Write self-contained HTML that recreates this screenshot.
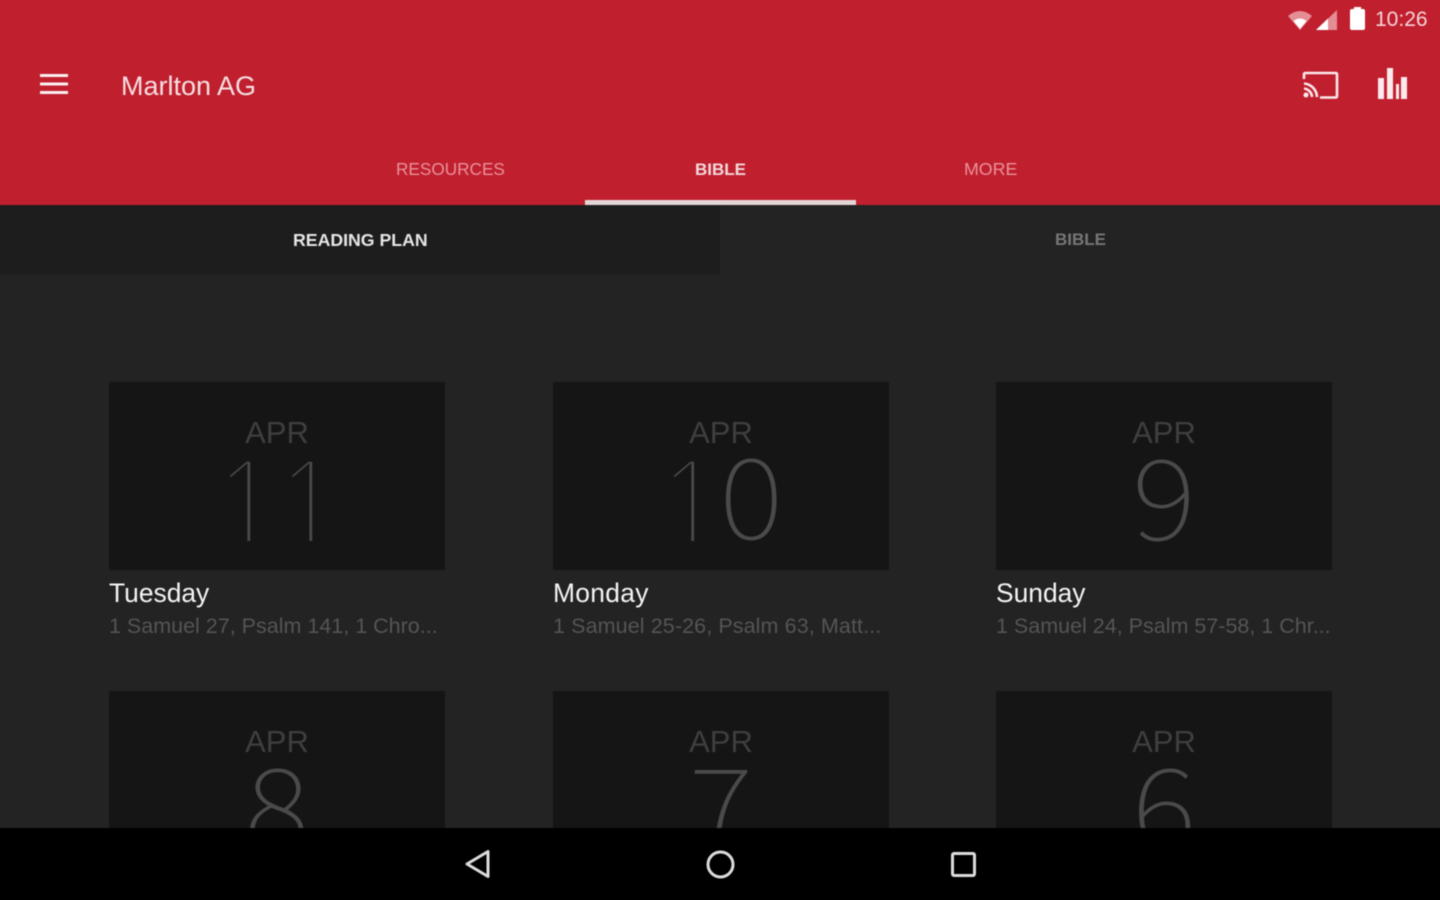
<!DOCTYPE html>
<html><head><meta charset="utf-8"><style>
html,body{margin:0;padding:0;width:1440px;height:900px;overflow:hidden;background:#232323}
body{position:relative;font-family:"Liberation Sans",sans-serif}
#w{position:absolute;left:0;top:0;width:1440px;height:900px;filter:blur(.55px)}
.a{position:absolute;white-space:nowrap}
.card{position:absolute;width:336px;height:188px;background:#151515;overflow:hidden}
.apr{position:absolute;left:0;width:336px;text-align:center;top:32px;font-size:31px;line-height:38px;color:#3f3f3f}
.num{position:absolute;left:0;width:336px;text-align:center;color:#4a4a4a}
.n1{top:57px;font-family:NanumGothic,sans-serif;font-size:113px;line-height:130px;-webkit-text-stroke:5px #151515;paint-order:fill stroke;letter-spacing:-6.500px;box-sizing:border-box;padding-right:8px}
.nt{top:45px;font-family:"Noto Sans CJK JP",sans-serif;font-weight:100;font-size:112px;line-height:130px;transform:scaleX(1.1)}
.z{display:inline-block;position:relative;top:-4px;font-family:"Noto Sans CJK JP",sans-serif;font-weight:100;font-size:112px;line-height:0;-webkit-text-stroke:0;letter-spacing:0;transform:scaleX(1.1);margin-left:5px}
.d{font-size:26.400px;line-height:30px;color:#f4f4f4}
.s{font-size:21.500px;line-height:26px;color:#555}
</style></head><body><div id="w">
<div class="a" style="left:-5px;top:-5px;width:1450px;height:210px;background:#c01f2e"></div>
<div class="a" style="left:-5px;top:205px;width:725px;height:70px;background:#1d1d1d"></div>
<div class="a" style="left:585px;top:200px;width:271px;height:5px;background:#e4d6d7"></div>

<svg class="a" style="left:1285px;top:5px" width="60" height="28" viewBox="0 0 60 28">
<path d="M3 11 Q15 1 27 11 L15 25Z" fill="#e58d95"/>
<path d="M8.500 16 Q15 11 21.500 16 L15 24Z" fill="#fff"/>
<path d="M31 25 L52 5 V25Z" fill="#e58d95"/>
<path d="M31 25 L43 13.500 V25Z" fill="#fff"/>
</svg>
<div class="a" style="left:1350px;top:9px;width:15px;height:21px;background:#fff;border-radius:2px"></div>
<div class="a" style="left:1354px;top:7px;width:7px;height:3px;background:#fff"></div>
<div class="a" style="left:1375px;top:7px;font-size:21px;line-height:26px;color:#f3d5d8">10:26</div>

<svg class="a" style="left:38px;top:72px" width="32" height="24" viewBox="0 0 32 24"><path d="M2 3.500H30M2 12H30M2 20.500H30" stroke="#fbeef0" stroke-width="3" fill="none"/></svg>
<div class="a" style="left:121px;top:69px;font-size:27px;line-height:34px;color:#f6dfe1">Marlton AG</div>

<svg class="a" style="left:1300px;top:68px" width="40" height="34" viewBox="0 0 40 34" fill="none" stroke="#fbe9eb" stroke-width="2.600">
<path d="M4 11V6.500Q4 5 5.500 5H35.500Q37 5 37 6.500V28Q37 29.500 35.500 29.500H20"/>
<path d="M4 15.500A14 14 0 0 1 17 29M4 20.500A9 9 0 0 1 12 29"/>
<circle cx="6" cy="27" r="2.500" fill="#fbe9eb" stroke="none"/>
</svg>
<svg class="a" style="left:1375px;top:66px" width="36" height="36" viewBox="0 0 36 36" fill="#fbe9eb">
<rect x="3" y="12" width="6" height="21"/><rect x="12" y="2" width="6" height="31"/><rect x="21" y="18" width="3" height="15"/><rect x="26" y="11" width="6" height="22"/>
</svg>

<div class="a" style="left:396px;top:157px;font-size:17.200px;line-height:24px;color:#e9929a">RESOURCES</div>
<div class="a" style="left:695px;top:158px;font-size:17px;line-height:24px;font-weight:700;color:#f3d9db">BIBLE</div>
<div class="a" style="left:964px;top:157px;font-size:17.800px;line-height:24px;color:#e9929a">MORE</div>

<div class="a" style="left:293px;top:228px;font-size:17.700px;line-height:24px;font-weight:700;color:#e6e6e6">READING PLAN</div>
<div class="a" style="left:1055px;top:228px;font-size:17px;line-height:24px;font-weight:700;color:#777">BIBLE</div>

<div class="card" style="left:109px;top:382px"><div class="apr">APR</div><div class="num n1">11</div></div>
<div class="card" style="left:553px;top:382px"><div class="apr">APR</div><div class="num n1" style="padding-right:7px">1<span class="z">0</span></div></div>
<div class="card" style="left:996px;top:382px"><div class="apr">APR</div><div class="num nt">9</div></div>
<div class="card" style="left:109px;top:691px"><div class="apr">APR</div><div class="num nt">8</div></div>
<div class="card" style="left:553px;top:691px"><div class="apr">APR</div><div class="num nt">7</div></div>
<div class="card" style="left:996px;top:691px"><div class="apr">APR</div><div class="num nt">6</div></div>

<div class="a d" style="left:109px;top:578px">Tuesday</div>
<div class="a d" style="left:553px;top:578px;letter-spacing:.3px">Monday</div>
<div class="a d" style="left:996px;top:578px">Sunday</div>
<div class="a s" style="left:109px;top:613px">1 Samuel 27, Psalm 141, 1 Chro...</div>
<div class="a s" style="left:553px;top:613px;letter-spacing:.1px">1 Samuel 25-26, Psalm 63, Matt...</div>
<div class="a s" style="left:996px;top:613px">1 Samuel 24, Psalm 57-58, 1 Chr...</div>

<div class="a" style="left:-5px;top:828px;width:1450px;height:80px;background:#000"></div>
<svg class="a" style="left:460px;top:846px" width="520" height="38" viewBox="0 0 520 38" fill="none" stroke="#dcdcdc" stroke-width="3" stroke-linejoin="round">
<path d="M7 18 L28 5.500V30.500Z"/>
<circle cx="260.500" cy="18.500" r="12.500"/>
<rect x="492.500" y="7.500" width="22" height="22" rx="1.500"/>
</svg>
</div></body></html>
